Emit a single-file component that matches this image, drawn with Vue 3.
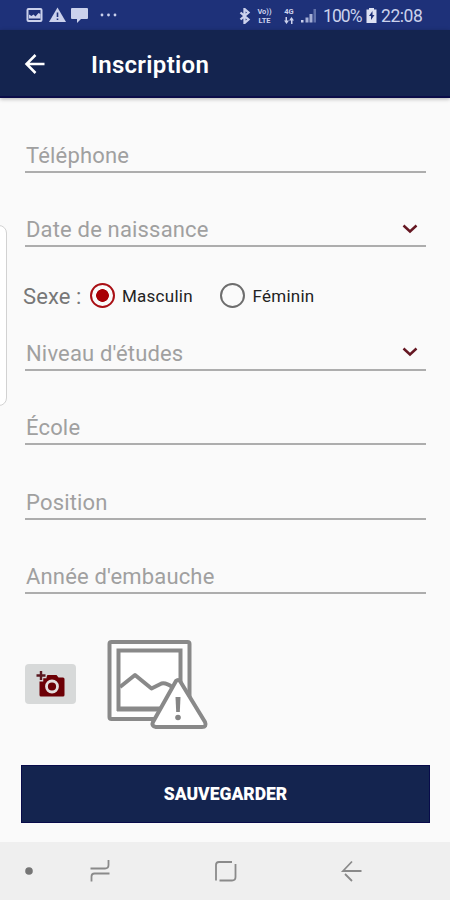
<script setup>
import { ref } from 'vue'

const sex = ref('m')
const lowerFields = [
  { label: 'Niveau d\'études', cls: 'niveau', select: true },
  { label: 'École', cls: 'ecole' },
  { label: 'Position', cls: 'position' },
  { label: 'Année d\'embauche', cls: 'annee' },
]
const upperFields = [
  { label: 'Téléphone', cls: 'tel' },
  { label: 'Date de naissance', cls: 'date', select: true },
]
</script>

<template>
  <div class="screen">
    <div class="status">
      <svg class="status-left" width="94" height="30" viewBox="0 0 94 30">
        <rect x="2.500" y="9" width="14" height="12" rx="1" fill="none" stroke="#cbd1ec" stroke-width="2" />
        <path d="M4 10h11v3l-1.500-1-2.500 3.500-2-2-2.500 2-2.500-1z" fill="#1e3179" />
        <path d="M4 18.500v-4l2.500 1.500 2-1.500 2 2 3-3.500 2 1v4.500z" fill="#cbd1ec" />
        <path d="M32.500 7.500l8.500 14.500h-17z" fill="#cbd1ec" />
        <path d="M32.500 12.500v4.500M32.500 18.600v1.500" stroke="#1e3179" stroke-width="1.600" />
        <path d="M47 8h15q1 0 1 1v9q0 1-1 1h-6l-4 4v-4h-5q-1 0-1-1v-9q0-1 1-1z" fill="#cbd1ec" />
        <circle cx="77" cy="15" r="1.400" fill="#cbd1ec" /><circle cx="83.500" cy="15" r="1.400" fill="#cbd1ec" /><circle cx="90" cy="15" r="1.400" fill="#cbd1ec" />
      </svg>
      <div class="status-right">
        <svg class="bt" width="12" height="16" viewBox="0 0 12 16"><path d="M1.500 4.500l8 7-4 3.500V1l4 3.500-8 7" fill="none" stroke="#cbd1ec" stroke-width="2.300" /></svg>
        <div class="tiny volte"><span>Vo))</span><span>LTE</span></div>
        <div class="tiny lte"><span>4G</span><svg width="10" height="7" viewBox="0 0 10 7"><path d="M3 0v3.500h2L2.500 7 0 3.500h1.500V0zM7.500 0L10 3.500H8.500V7H7V3.500H5z" fill="#cbd1ec" /></svg></div>
        <svg class="signal" width="16" height="15" viewBox="0 0 16 15"><path d="M0 12h2.500v2.500H0z" fill="#cbd1ec" /><path d="M4.500 9.500h3v5h-3zM8.500 6h3v8.500h-3z" fill="#a5afd6" /><path d="M12.500 1h2.500v13.500h-2.500z" fill="#6171aa" /></svg>
        <span class="percent">100%</span>
        <svg class="battery" width="11" height="15" viewBox="0 0 11 15"><path d="M3 1.500V0h5v1.500h2.500V15H.5V1.500z" fill="#dde1f3" /><path d="M6.500 3L3 8h2v4l3.500-5h-2z" fill="#1e3179" /></svg>
        <span class="time">22:08</span>
      </div>
    </div>

    <header class="appbar">
      <svg class="back" width="22" height="22" viewBox="0 0 22 22"><path d="M11.500 2L2.500 11l9 9M2.500 11H20.500" fill="none" stroke="#fff" stroke-width="2.500" /></svg>
      <h1><span>Inscription</span></h1>
    </header>

    <main class="form">
      <div v-for="f in upperFields" :key="f.cls" class="field" :class="f.cls">
        <span class="label">{{ f.label }}</span>
        <svg v-if="f.select" class="chevron" width="16" height="10" viewBox="0 0 16 10"><path d="M1.500 1.500L8 7.500l6.500-6" fill="none" stroke="#651722" stroke-width="2.500" /></svg>
      </div>

      <div class="sex">
        <span class="sex-label">Sexe :</span>
        <button class="radio" :class="{ on: sex === 'm' }" @click="sex = 'm'"></button>
        <span class="opt masculin">Masculin</span>
        <button class="radio second" :class="{ on: sex === 'f' }" @click="sex = 'f'"></button>
        <span class="opt feminin">Féminin</span>
      </div>

      <div v-for="f in lowerFields" :key="f.cls" class="field" :class="f.cls">
        <span class="label">{{ f.label }}</span>
        <svg v-if="f.select" class="chevron" width="16" height="10" viewBox="0 0 16 10"><path d="M1.500 1.500L8 7.500l6.500-6" fill="none" stroke="#651722" stroke-width="2.500" /></svg>
      </div>

      <div class="photo">
        <button class="camera">
          <svg width="30" height="26" viewBox="0 0 30 26">
            <path d="M3.500 7h6l2-3h9l2 2.500h4.500q1.500 0 1.500 1.500v16q0 1.500-1.500 1.500H5q-1.500 0-1.500-1.500z" fill="#6d0006" />
            <path d="M5 0v10.500M0 5h10.500" stroke="#d7d9d9" stroke-width="4.500" />
            <path d="M5 0v9M.5 4.500h9" stroke="#5b1820" stroke-width="2.400" />
            <circle cx="16" cy="15.500" r="5.500" fill="none" stroke="#e4dede" stroke-width="2.800" />
          </svg>
        </button>
        <svg class="placeholder" width="102" height="92" viewBox="0 0 102 92">
          <g fill="none" stroke="#898989" stroke-width="4" stroke-linejoin="round">
            <rect x="2.500" y="3" width="80" height="77" rx="2" fill="#fdfdfd" />
            <path d="M11.500 11.500h62v58.500h-62z" fill="#fff" stroke-linejoin="miter" />
            <path d="M10 70h65" stroke-width="5" />
            <path d="M13 48l15-12 16.500 13.500 10-5q5-1 11 4" />
            <path d="M69 42q2-2 4 0l25 41q2 5-3 5H49q-5-1-3-5z" fill="#fff" />
          </g>
          <path d="M68.500 58h5l-.7 15h-3.600z" fill="#858585" /><circle cx="71" cy="78.500" r="2.800" fill="#858585" />
        </svg>
      </div>

      <button class="save"><span>SAUVEGARDER</span></button>
    </main>

    <nav class="navbar">
      <svg width="450" height="58" viewBox="0 0 450 58" fill="none" stroke="#8a8a8a" stroke-width="1.800">
        <circle cx="29" cy="29" r="3.800" fill="#757575" stroke="none" />
        <path d="M90.500 26.500H105q3.500 0 3.500-3.500V18M109.500 31.500H94.500q-3 0-3 3v5" />
        <path d="M232 20H219q-3 0-3 3v15.500M219.500 38.500H232q3.500 0 3.500-3.500V22" />
        <path d="M361.500 29H343l9-9.500M345 32l7 7" />
      </svg>
    </nav>
  </div>
</template>

<style>
body { margin: 0; }
</style>

<style scoped>
.screen {
  width: 450px;
  height: 900px;
  display: flex;
  flex-direction: column;
  background: #fafafa;
  font-family: Roboto, "Liberation Sans", sans-serif;
  overflow: hidden;
  position: relative;
}
.screen::before {
  content: "";
  position: absolute;
  left: -11px;
  top: 225px;
  width: 16px;
  height: 179px;
  border: 1px solid #d2d2d2;
  border-radius: 0 8px 8px 0;
  background: #fff;
}
button { border: 0; padding: 0; font: inherit; }
.status {
  flex: none;
  height: 30px;
  background: #1e3179;
  display: flex;
  justify-content: space-between;
  padding: 0 27px 0 25px;
  color: #cbd1ec;
}
.status-right { display: flex; align-items: center; height: 31px; }
.status-right svg { flex: none; }
.tiny {
  display: flex;
  flex-direction: column;
  align-items: center;
  font-size: 7.5px;
  line-height: 9px;
  font-weight: 700;
  white-space: nowrap;
}
.tiny svg { margin-top: 1px; }
.bt { margin-right: 6px; }
.volte { width: 15px; margin-right: 11px; }
.lte { width: 12px; margin-right: 6px; }
.signal { margin-right: 6px; }
.percent { width: 39px; font-size: 17.5px; letter-spacing: -0.9px; white-space: nowrap; }
.battery { margin: 0 4px; }
.time { width: 42px; font-size: 17.5px; letter-spacing: -0.45px; white-space: nowrap; }
.appbar {
  flex: none;
  height: 68px;
  box-sizing: border-box;
  background: #14244f;
  border-bottom: 2px solid #0b0d48;
  box-shadow: 0 1px 4px rgba(0, 0, 0, .3);
  display: flex;
  align-items: center;
  padding-left: 24px;
}
.back { margin-top: 1px; }
h1 {
  margin: 3px 0 0 45px;
  font-size: 24px;
  line-height: 28px;
  letter-spacing: .3px;
  font-weight: 600;
  color: #fff;
}
.form {
  flex: 1;
  display: flex;
  flex-direction: column;
  padding: 0 24px 0 25px;
}
.field {
  flex: none;
  height: 74.3px;
  box-sizing: border-box;
  border-bottom: 2px solid #adadad;
  display: flex;
  align-items: flex-end;
  justify-content: space-between;
  padding: 0 8px 2px 1px;
}
.tel { height: 75px; }
.label { font-size: 22px; line-height: 26px; letter-spacing: .17px; color: #a0a0a0; white-space: nowrap; }
.chevron { margin-bottom: 9px; }
.niveau .chevron { margin-bottom: 10px; }
.sex {
  flex: none;
  height: 74.3px;
  box-sizing: border-box;
  padding-top: 23px;
  display: flex;
  align-items: center;
  margin-left: -2px;
}
.sex + .field { height: 49.4px; }
.sex-label { width: 66.5px; padding-top: 2px; font-size: 22px; letter-spacing: .1px; color: #777; white-space: nowrap; }
.radio {
  width: 25px;
  height: 25px;
  flex: none;
  border: 2px solid #6d6d6d;
  border-radius: 50%;
  background: #fafafa;
}
.radio.on { border-color: #a90f14; background: radial-gradient(circle, #a80006 0 6px, #fafafa 6.7px); }
.opt { font-size: 17px; letter-spacing: .25px; color: #222; margin-left: 7.5px; white-space: nowrap; }
.masculin { width: 98px; }
.photo { display: flex; height: 92px; margin-top: 45px; align-items: flex-start; }
.camera {
  width: 51px;
  height: 40px;
  margin-top: 25px;
  border-radius: 4px;
  background: #d7d9d9;
  display: flex;
  align-items: center;
  justify-content: center;
}
.placeholder { margin-left: 31px; }
.save {
  height: 58px;
  flex: none;
  margin: 34px -4px 0;
  background: #14244f;
  border: 1px solid #080b4a;
  color: #fff;
  font-size: 17.5px;
  font-weight: 900;
}
.navbar { flex: none; height: 58px; background: #efefef; }
</style>
